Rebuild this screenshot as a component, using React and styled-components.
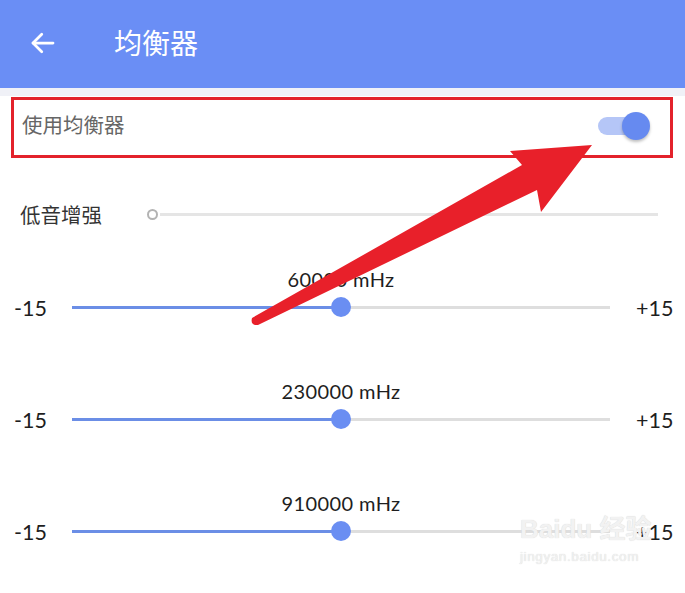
import React from "react";
import styled, { createGlobalStyle } from "styled-components";

const Global = createGlobalStyle`
  html, body { margin: 0; padding: 0; background: #fff; }
  body { width: 685px; height: 593px; overflow: hidden; font-family: Lato, "Noto Sans CJK SC", sans-serif; }
`;

const Page = styled.div`
  position: relative;
  width: 685px;
  height: 593px;
  background: #fff;
  overflow: hidden;
`;

const Header = styled.header`
  height: 88px;
  background: #6a8ef5;
  display: flex;
  align-items: center;
  padding-left: 28px;
  box-sizing: border-box;
`;

const BackIcon = styled.svg`
  width: 30px;
  height: 30px;
  margin-top: -2px;
`;

const Title = styled.h1`
  margin: -4px 0 0 56px;
  font-family: "Noto Sans CJK SC", sans-serif;
  font-weight: 400;
  font-size: 28px;
  color: #fff;
  line-height: 1;
`;

const Strip = styled.div`
  height: 8px;
  background: #f0f1f7;
`;

const SwitchBox = styled.div`
  margin: 1px 12px 0 11px;
  height: 61px;
  box-sizing: border-box;
  border: 3px solid #e3222b;
  display: flex;
  align-items: center;
  justify-content: space-between;
  padding: 0 20px 4px 8px;
`;

const SwitchLabel = styled.span`
  font-family: "Noto Sans CJK SC", sans-serif;
  font-size: 20.5px;
  color: #666;
  margin-top: -4px;
`;

const Toggle = styled.div`
  position: relative;
  width: 52px;
  height: 28px;
  display: flex;
  align-items: center;
`;

const ToggleTrack = styled.div`
  width: 42px;
  height: 18px;
  border-radius: 9px;
  background: #b5c6f7;
`;

const ToggleThumb = styled.div`
  position: absolute;
  right: 0;
  top: 0;
  width: 28px;
  height: 28px;
  border-radius: 50%;
  background: #668af0;
  box-shadow: 0 2px 3px rgba(0, 0, 0, 0.25);
`;

const BassRow = styled.div`
  margin-top: 36px;
  height: 40px;
  display: flex;
  align-items: center;
  padding-left: 20px;
  padding-right: 27px;
`;

const BassLabel = styled.span`
  font-family: "Noto Sans CJK SC", sans-serif;
  font-size: 20.5px;
  color: #333;
  width: 127px;
`;

const Ring = styled.div`
  width: 7px;
  height: 7px;
  border-radius: 50%;
  border: 2px solid #b3b3b3;
  flex: none;
`;

const GreyTrack = styled.div`
  flex: 1;
  height: 3px;
  background: #e5e5e5;
  margin-left: 2px;
`;

const Band = styled.div`
  margin-top: ${(p) => p.$gap}px;
  display: flex;
  flex-direction: column;
`;

const FreqLabel = styled.div`
  height: 24px;
  line-height: 24px;
  text-align: center;
  width: 682px;
  font-size: 20px;
  color: #1e1e1e;
  letter-spacing: 0.4px;
`;

const SliderRow = styled.div`
  height: 32px;
  display: flex;
  align-items: center;
`;

const Limit = styled.span`
  box-sizing: border-box;
  width: ${(p) => p.$w}px;
  padding-left: ${(p) => p.$pad}px;
  font-size: 21.5px;
  color: #1e1e1e;
  margin-top: 2px;
`;

const Track = styled.div`
  position: relative;
  width: 538px;
  height: 3px;
  background: #dedede;
`;

const Fill = styled.div`
  height: 100%;
  background: #6b8ee6;
`;

const Thumb = styled.div`
  position: absolute;
  top: 50%;
  width: 20px;
  height: 20px;
  margin: -10px 0 0 -10px;
  border-radius: 50%;
  background: #6a8ef2;
`;

const Watermark = styled.div`
  position: absolute;
  left: 520px;
  top: 514px;
  color: #f2f2f2;
  text-shadow: 0 0 1px #cfcfcf;
  font-family: "Liberation Sans", "Noto Sans CJK SC", sans-serif;
  display: flex;
  flex-direction: column;
  align-items: flex-start;
  white-space: nowrap;
  pointer-events: none;
`;

const WmTop = styled.span`
  font-size: 26px;
  font-weight: 700;
  line-height: 30px;
`;

const WmBottom = styled.span`
  font-size: 13.5px;
  line-height: 18px;
  margin-top: 4px;
  letter-spacing: 0.6px;
`;

const Arrow = styled.svg`
  position: absolute;
  left: 0;
  top: 0;
  width: 685px;
  height: 593px;
  pointer-events: none;
`;

const bands = [
  { label: "60000 mHz", value: 0.5, gap: 33 },
  { label: "230000 mHz", value: 0.5, gap: 56 },
  { label: "910000 mHz", value: 0.5, gap: 56 },
];

export default function App() {
  return (
    <Page>
      <Global />
      <Header>
        <BackIcon viewBox="0 0 24 24" fill="none" stroke="#fff" strokeWidth="2.2" strokeLinecap="round" strokeLinejoin="round">
          <path d="M20 12H4" />
          <path d="M11 5l-7 7 7 7" />
        </BackIcon>
        <Title>均衡器</Title>
      </Header>
      <Strip />
      <SwitchBox>
        <SwitchLabel>使用均衡器</SwitchLabel>
        <Toggle>
          <ToggleTrack />
          <ToggleThumb />
        </Toggle>
      </SwitchBox>
      <BassRow>
        <BassLabel>低音增强</BassLabel>
        <Ring />
        <GreyTrack />
      </BassRow>
      {bands.map((b) => (
        <Band key={b.label} $gap={b.gap}>
          <FreqLabel>{b.label}</FreqLabel>
          <SliderRow>
            <Limit $w={72} $pad={14}>-15</Limit>
            <Track>
              <Fill style={{ width: `${b.value * 100}%` }} />
              <Thumb style={{ left: `${b.value * 100}%` }} />
            </Track>
            <Limit $w={75} $pad={26}>+15</Limit>
          </SliderRow>
        </Band>
      ))}
      <Watermark>
        <WmTop>Baidu 经验</WmTop>
        <WmBottom>jingyan.baidu.com</WmBottom>
      </Watermark>
      <Arrow viewBox="0 0 685 593">
        <path
          d="M252 318 L522 165 L510 151 L592 145 L541 212 L537 190 L258 325 Q250 326 252 318 Z"
          fill="#e8202a"
        />
      </Arrow>
    </Page>
  );
}
